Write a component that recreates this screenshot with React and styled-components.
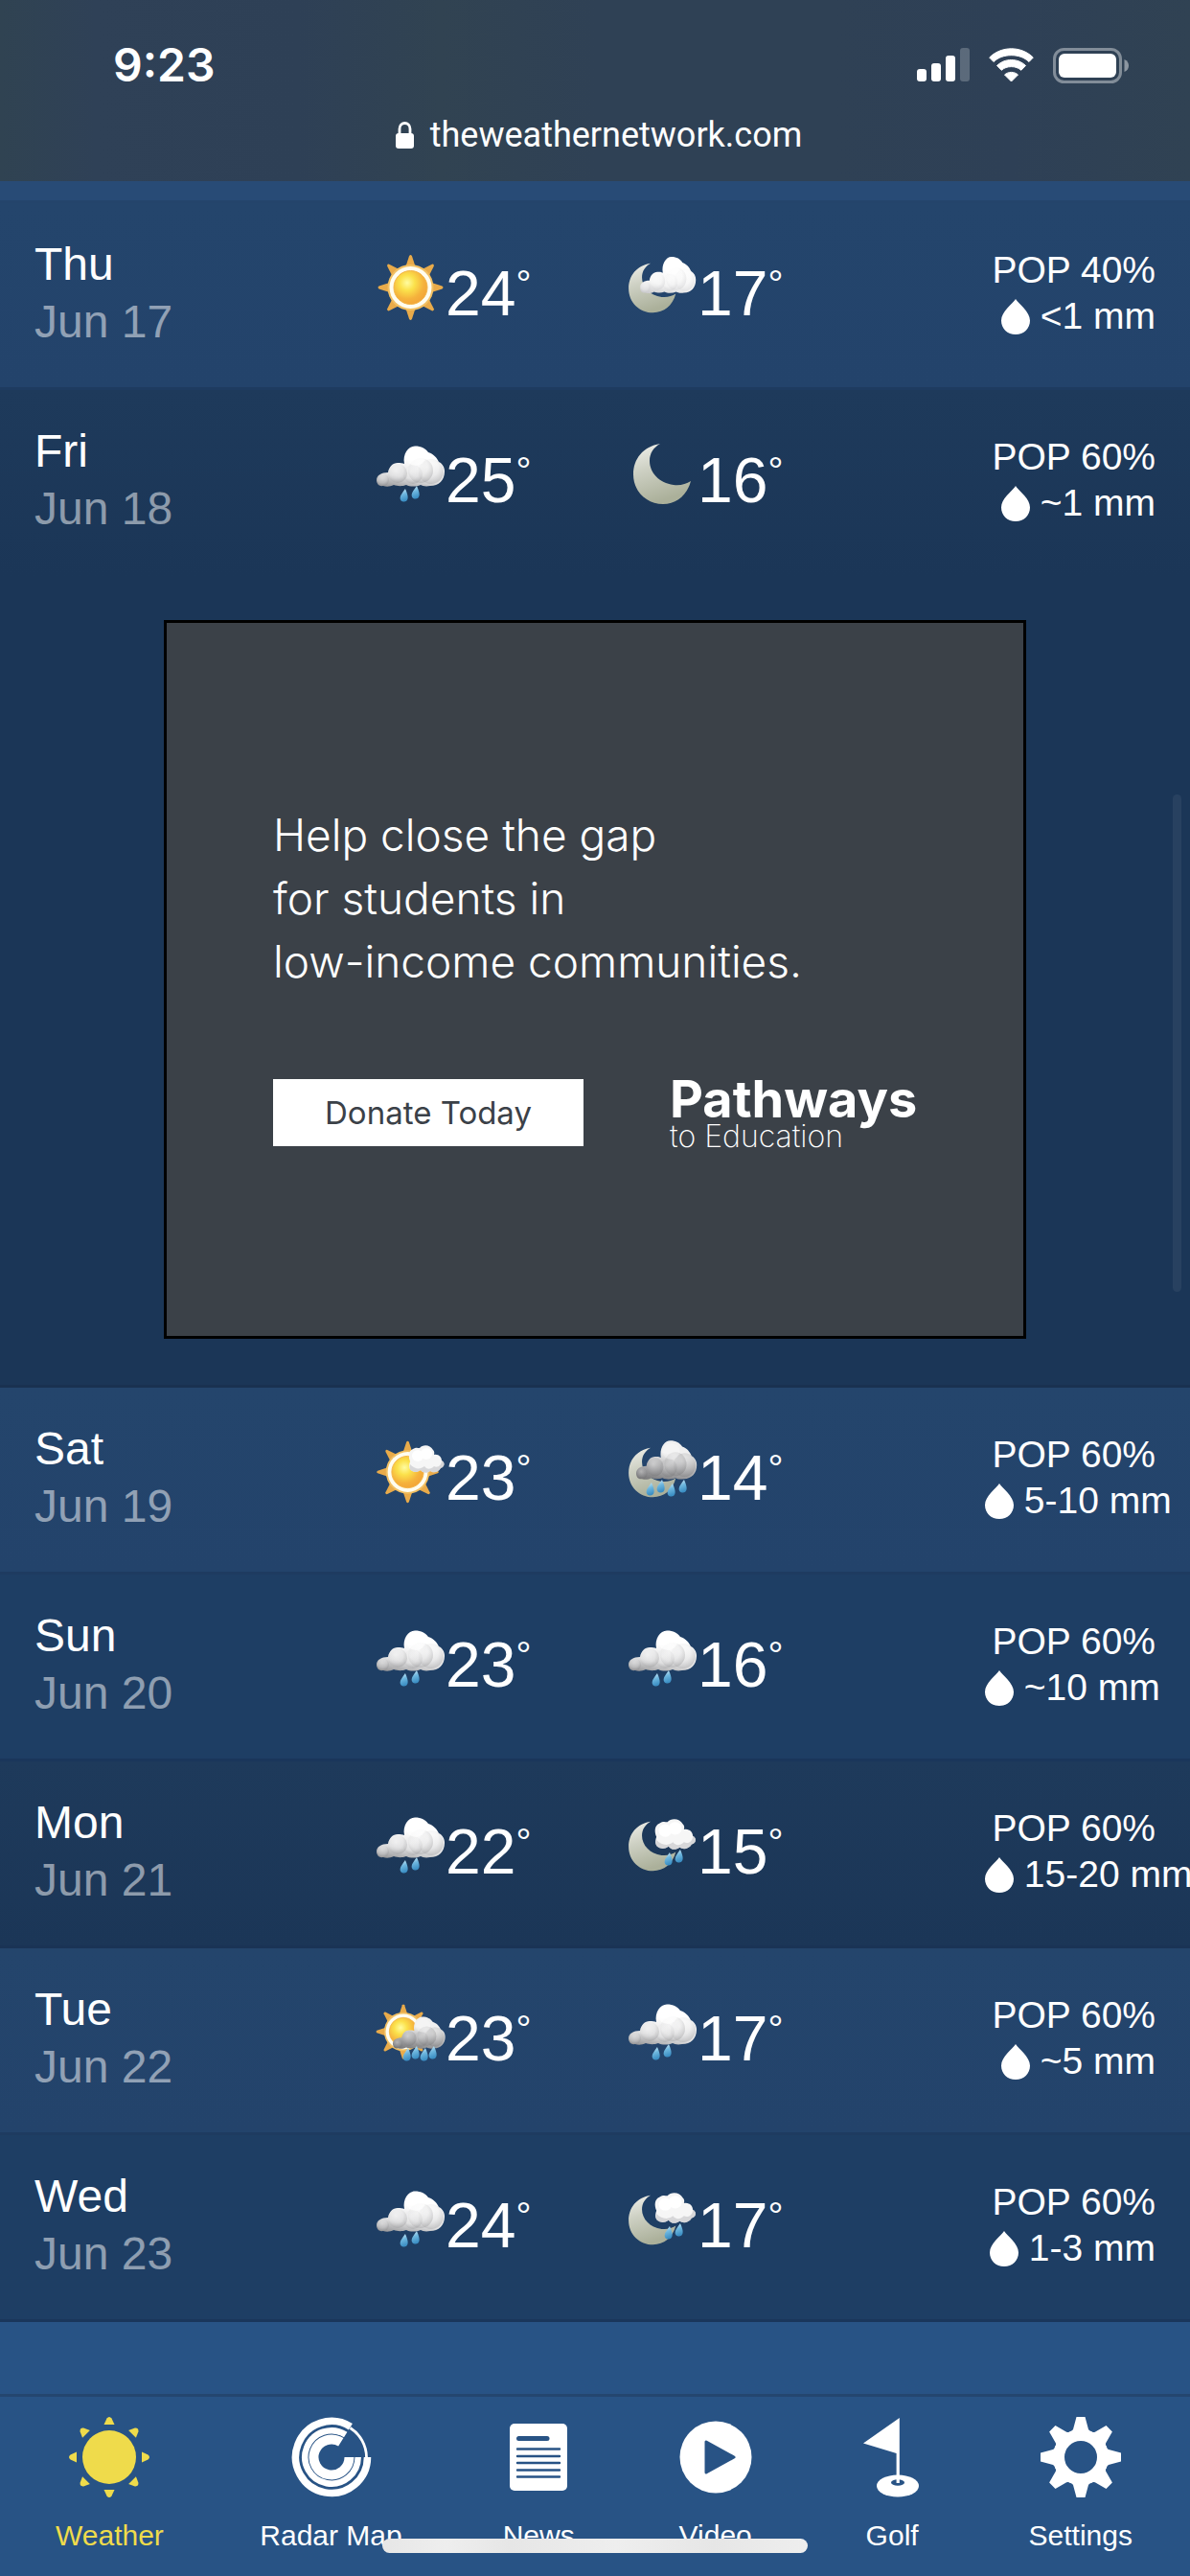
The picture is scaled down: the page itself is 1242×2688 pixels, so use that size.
import React from "react";
import styled, { createGlobalStyle } from "styled-components";

const GlobalStyle = createGlobalStyle`
  *, *::before, *::after { box-sizing: border-box; }
  html, body { margin: 0; padding: 0; }
  body {
    background: #285385;
    color: #fff;
    font-family: "Liberation Sans", Arial, sans-serif;
    overflow-x: hidden;
  }
`;

const Page = styled.div`
  position: relative;
  display: flex;
  flex-direction: column;
  min-height: 100vh;
  overflow: hidden;
  background: #285385;
`;

/* ---------- browser chrome ---------- */

const Chrome = styled.header`
  display: flex;
  flex-direction: column;
  gap: 25px;
  padding: 44px 64px 24px 118px;
  background: linear-gradient(90deg, #304352 0%, #2f4157 8%, #2e4056 25%, #314352 37%, #2f4155 50%, #2f4155 70%, #2e4056 85%, #304253 100%);
  font-family: Inter, Roboto, sans-serif;
`;

const StatusRow = styled.div`
  display: flex;
  align-items: center;
  justify-content: space-between;
  height: 48px;
`;

const Clock = styled.time`
  font-size: 48px;
  line-height: 48px;
  font-weight: 600;
`;

const StatusIcons = styled.div`
  display: flex;
  align-items: center;
  gap: 20px;
`;

const AddressRow = styled.div`
  display: flex;
  align-items: center;
  justify-content: center;
  gap: 17px;
  height: 48px;
  margin-left: -46px;
  font-family: Roboto, Inter, sans-serif;
  font-size: 36px;
  line-height: 48px;
`;

/* ---------- forecast ---------- */

const Strip = styled.div`
  height: 23px;
  background: #284b76;
  border-bottom: 3px solid #24446b;
`;

const Forecast = styled.table`
  display: block;
  width: 100%;
  border-spacing: 0;
`;

const Body = styled.tbody`
  display: block;
`;

const tones = {
  light: "linear-gradient(#24456c, #23436b)",
  mid: "#1e3e64",
  dark: "linear-gradient(#1e3a5b, #1b3657)",
};

const DayRow = styled.tr`
  display: grid;
  grid-template-columns: 357fr 263fr 372fr 178px;
  height: 195px;
  padding: 0 36px;
  overflow: hidden;
  background: ${(p) => tones[p.$tone]};
  border-bottom: ${(p) => (p.$open ? "0" : "3px solid rgba(20, 40, 75, 0.35)")};
`;

const DayCell = styled.th`
  padding: 34px 0 0;
  font-size: 48px;
  line-height: 60px;
  font-weight: 400;
  text-align: left;
`;

const DayDate = styled.div`
  color: rgba(255, 255, 255, 0.5);
`;

const TempCell = styled.td`
  display: flex;
  align-items: flex-start;
  padding: 54px 0 0;
`;

const TempValue = styled.span`
  font-size: 66px;
  line-height: 80px;
`;

const Degree = styled.span`
  font-size: 40px;
  line-height: 60px;
`;

const PopCell = styled.td`
  padding: 46px 0 0;
  font-size: 39px;
  line-height: 48px;
  text-align: right;
  white-space: nowrap;
`;

const DropIcon = styled.svg`
  width: 30px;
  height: 37px;
  vertical-align: -6px;
`;

const AdRow = styled.tr`
  display: block;
  background: #1b3657;
  border-bottom: 3px solid #193150;
`;

const AdCell = styled.td`
  display: flex;
  justify-content: center;
  padding: 45px 36px 48px;
`;

/* ---------- advertisement ---------- */

const Ad = styled.aside`
  width: 900px;
  max-width: 100%;
  height: 750px;
  padding: 188px 60px 0 111px;
  background: #3b4148;
  border: 3px solid #000;
  font-family: Inter, "Open Sans", sans-serif;
`;

const AdCopy = styled.p`
  margin: 0 0 90px;
  font-size: 46px;
  line-height: 66px;
  font-weight: 350;
`;

const AdActions = styled.div`
  display: flex;
  align-items: flex-start;
  gap: 90px;
`;

const DonateButton = styled.button`
  width: 324px;
  height: 70px;
  padding: 0;
  border: 0;
  background: #fff;
  color: #3b4148;
  font-family: inherit;
  font-size: 33px;
  font-weight: 400;
`;

const Brand = styled.div`
  white-space: nowrap;
`;

const BrandName = styled.div`
  font-size: 54px;
  line-height: 42px;
  font-weight: 700;
`;

const BrandTag = styled.div`
  font-size: 32px;
  line-height: 36px;
  font-weight: 200;
`;

/* ---------- bottom navigation ---------- */

const Nav = styled.nav`
  display: flex;
  justify-content: space-between;
  margin-top: auto;
  padding: 21px 60px 24px 58px;
  border-top: 3px solid #24466f;
  background: #285385;
`;

const NavLink = styled.a`
  display: flex;
  flex-direction: column;
  align-items: center;
  gap: 22px;
  min-width: 84px;
  color: ${(p) => (p.$active ? "#efdb4b" : "#fff")};
  font-size: 30px;
  line-height: 36px;
  text-decoration: none;
  white-space: nowrap;
`;

const NavGlyph = styled.svg`
  width: 84px;
  height: 84px;
`;

const HomeIndicator = styled.div`
  position: absolute;
  bottom: 24px;
  left: 50%;
  width: 444px;
  height: 15px;
  margin-left: -222px;
  border-radius: 8px;
  background: linear-gradient(90deg, #e6e6e6, #eee 15%, #e6e6e6 30%, #eee 55%, #e6e6e6 78%, #eee);
`;

const ScrollThumb = styled.div`
  position: absolute;
  top: 829px;
  right: 9px;
  width: 9px;
  height: 519px;
  border-radius: 5px;
  background: rgba(255, 255, 255, 0.06);
`;

const Defs = styled.svg`
  position: absolute;
  width: 0;
  height: 0;
`;

const WeatherSvg = styled.svg`
  flex: none;
  width: 72px;
  height: 72px;
  overflow: visible;
`;

/* ---------- weather drawings ---------- */

function SharedDefs() {
  return (
    <Defs aria-hidden="true">
      <defs>
        <radialGradient id="sunDisc" cx="0.4" cy="0.36" r="0.65">
          <stop offset="0" stopColor="#fffca0" />
          <stop offset="0.35" stopColor="#fbe14b" />
          <stop offset="0.75" stopColor="#f5b23c" />
          <stop offset="1" stopColor="#f3a638" />
        </radialGradient>
        <linearGradient id="moonFill" x1="0" y1="0" x2="0.3" y2="1">
          <stop offset="0" stopColor="#f1f1ec" />
          <stop offset="0.45" stopColor="#cdd0c3" />
          <stop offset="1" stopColor="#abb09a" />
        </linearGradient>
        <linearGradient id="dropFill" x1="0" y1="0" x2="0.3" y2="1">
          <stop offset="0" stopColor="#d3ecf8" />
          <stop offset="0.5" stopColor="#6db6de" />
          <stop offset="1" stopColor="#3c8fc4" />
        </linearGradient>
        {[
          ["white", "#ffffff", "#f4f4f4", "#c4c4c7"],
          ["soft", "#ffffff", "#e0e0e1", "#8c8c8e"],
          ["gray", "#f0f0f0", "#a6a6a8", "#6e6e70"],
        ].map(([name, a, b, c]) => (
          <React.Fragment key={name}>
            <linearGradient id={`cloud-${name}`} gradientUnits="userSpaceOnUse" x1="8" y1="4" x2="0" y2="47">
              <stop offset="0.2" stopColor={a} />
              <stop offset="0.65" stopColor={b} />
              <stop offset="1" stopColor={c} />
            </linearGradient>
            <radialGradient id={`puff-${name}`} cx="0.4" cy="0.36" r="0.64">
              <stop offset="0" stopColor={a} stopOpacity="0.35" />
              <stop offset="0.6" stopColor={b} stopOpacity="0.3" />
              <stop offset="1" stopColor={c} stopOpacity="0.3" />
            </radialGradient>
          </React.Fragment>
        ))}
      </defs>
    </Defs>
  );
}

const EIGHTHS = [0, 45, 90, 135, 180, 225, 270, 315];

function Sun({ x, y, scale = 1 }) {
  return (
    <g transform={`translate(${x} ${y}) scale(${scale})`}>
      {EIGHTHS.map((a) => (
        <path key={a} d="M-5 -22 L-1.4 -33 Q0 -35 1.4 -33 L5 -22 Z" fill="#e9ab4a" transform={`rotate(${a})`} />
      ))}
      <circle r="24" fill="#f2c063" />
      <circle r="22" fill="#fffdf0" />
      <circle r="17.5" fill="url(#sunDisc)" stroke="#f3b548" strokeWidth="1" />
    </g>
  );
}

function Moon({ small }) {
  return (
    <path
      d="M33 2 C15 5 5 18 5 34 C5 52 19 65 36 65 C50 65 61 56 65 41 C60 44 54 46 47 45 C32 43 22 32 22 20 C22 12 26 6 33 2 Z"
      fill="url(#moonFill)"
      transform={small ? "translate(-4 7) scale(0.82)" : undefined}
    />
  );
}

function Cloud({ tone = "soft", transform }) {
  return (
    <g transform={transform}>
      <path
        d="M7 46 C2 47 0 43 0 40 C0 35 5 32 12 32 C13 26 17 22 22 22 C25 22 27 22 29 23 C27 13 33 4.500 40 4.500 C47 4.500 51 7 54 11 C60 13 63 17 65 21 C69 23 71 27 71 31 C71 40 65 46 56 46 C51 47 48 46 46 45 C41 47 35 47 31 45 C26 47 21 46 18 45 C14 47 10 47 7 46 Z"
        fill={`url(#cloud-${tone})`}
      />
      <circle cx="7" cy="40" r="6" fill={`url(#puff-${tone})`} />
      <circle cx="38" cy="34" r="10" fill={`url(#puff-${tone})`} />
      <circle cx="22" cy="33" r="10" fill={`url(#puff-${tone})`} />
      <circle cx="57" cy="31" r="13" fill={`url(#puff-${tone})`} />
      <circle cx="46" cy="30" r="13" fill={`url(#puff-${tone})`} />
      <ellipse cx="41" cy="16" rx="10" ry="9" fill="#fff" opacity={tone === "gray" ? 0.25 : 0.6} />
    </g>
  );
}

function Puff({ x, y, height = 29 }) {
  return (
    <g transform={`translate(${x} ${y}) scale(1 ${height / 29})`}>
      <path
        d="M3 27 C-1 25 0 20 1 17 C-1 12 -1 6 4 4 C7 2 9 3 11 3 C14 -1 22 -1 25 5 C27 7 26 9 26 10 C31 9 34 13 34 16 C38 18 37 23 33 24 C30 29 25 29 22 27 C18 30 14 29 12 26 C8 29 5 28 3 27 Z"
        fill="#f6f6f6"
      />
      <path
        d="M1 20 C0 25 1 26 3 27 C5 28 8 29 12 26 C14 29 18 30 22 27 C25 29 30 29 33 24 C37 23 38 18 34 16 C34 21 30 24 26 22 C22 26 18 25 16 22 C11 26 6 25 1 20 Z"
        fill="#c6c6ca"
        opacity="0.65"
      />
      <circle cx="9" cy="11" r="6" fill="#fff" />
      <circle cx="18" cy="9" r="6" fill="#fff" />
    </g>
  );
}

function Drops({ at }) {
  return at.map(([x, y]) => (
    <path
      key={x}
      transform={`translate(${x} ${y}) rotate(8)`}
      d="M0 -7 C2.500 -3 4 0 4 2.500 C4 8 -4 8 -4 2.500 C-4 0 -2 -3 0 -7 Z"
      fill="url(#dropFill)"
    />
  ));
}

const DRAWINGS = {
  sunny: () => <Sun x={35.5} y={34} />,
  partlySunny: () => (
    <>
      <Sun x={32.5} y={34} scale={0.95} />
      <Puff x={34} y={6} />
    </>
  ),
  sunShowers: () => (
    <>
      <Sun x={28} y={33} scale={0.84} />
      <Cloud tone="gray" transform="translate(17 14) scale(0.77 0.79)" />
      <Drops at={[[32, 57], [41, 55], [50, 57], [59, 55]]} />
    </>
  ),
  rain: () => (
    <>
      <Cloud tone="soft" />
      <Drops at={[[29, 56], [41, 53]]} />
    </>
  ),
  clearNight: () => <Moon />,
  cloudyNight: () => (
    <>
      <Moon small />
      <Cloud tone="white" transform="translate(12 -2) scale(0.82 0.9)" />
    </>
  ),
  rainyNight: () => (
    <>
      <Moon small />
      <Cloud tone="gray" transform="translate(8 -3) scale(0.89 0.96)" />
      <Drops at={[[23, 52], [34, 49], [45, 53], [57, 49]]} />
    </>
  ),
  showersNight: () => (
    <>
      <Moon small />
      <g transform="translate(28 6) scale(1.15 1)">
        <Puff x={0} y={0} height={32} />
      </g>
      <Drops at={[[42, 48], [53, 45]]} />
    </>
  ),
};

function WeatherIcon({ kind, label }) {
  return (
    <WeatherSvg viewBox="0 0 72 72" role="img" aria-label={label}>
      {DRAWINGS[kind]()}
    </WeatherSvg>
  );
}

function Temperature({ kind, label, value }) {
  return (
    <TempCell>
      <WeatherIcon kind={kind} label={label} />
      <TempValue>{value}</TempValue>
      <Degree>°</Degree>
    </TempCell>
  );
}

function Day({ day, date, tone, open, high, low, pop, rain }) {
  return (
    <DayRow $tone={tone} $open={open}>
      <DayCell scope="row">
        {day}
        <DayDate>{date}</DayDate>
      </DayCell>
      <Temperature {...high} />
      <Temperature {...low} />
      <PopCell>
        <div>POP {pop}</div>
        <div>
          <DropIcon viewBox="0 0 30 37" aria-hidden="true">
            <path d="M15 0 C18 5 30 13 30 22.500 C30 31 23.500 37 15 37 C6.500 37 0 31 0 22.500 C0 13 12 5 15 0 Z" fill="#fff" />
          </DropIcon>{" "}
          {rain}
        </div>
      </PopCell>
    </DayRow>
  );
}

const t = (kind, label, value) => ({ kind, label, value });

const BEFORE_AD = [
  { day: "Thu", date: "Jun 17", tone: "light", high: t("sunny", "Sunny", 24), low: t("cloudyNight", "Cloudy periods", 17), pop: "40%", rain: "<1 mm" },
  { day: "Fri", date: "Jun 18", tone: "dark", open: true, high: t("rain", "Light rain", 25), low: t("clearNight", "Clear", 16), pop: "60%", rain: "~1 mm" },
];

const AFTER_AD = [
  { day: "Sat", date: "Jun 19", tone: "light", high: t("partlySunny", "Mainly sunny", 23), low: t("rainyNight", "Rain", 14), pop: "60%", rain: "5-10 mm" },
  { day: "Sun", date: "Jun 20", tone: "mid", high: t("rain", "Light rain", 23), low: t("rain", "Light rain", 16), pop: "60%", rain: "~10 mm" },
  { day: "Mon", date: "Jun 21", tone: "dark", high: t("rain", "Light rain", 22), low: t("showersNight", "Showers", 15), pop: "60%", rain: "15-20 mm" },
  { day: "Tue", date: "Jun 22", tone: "light", high: t("sunShowers", "Sun and showers", 23), low: t("rain", "Light rain", 17), pop: "60%", rain: "~5 mm" },
  { day: "Wed", date: "Jun 23", tone: "mid", high: t("rain", "Light rain", 24), low: t("showersNight", "Showers", 17), pop: "60%", rain: "1-3 mm" },
];

/* ---------- navigation glyphs ---------- */

const BLUE = "#285385";

const NAV = [
  {
    name: "Weather",
    active: true,
    glyph: (
      <g transform="translate(42 42)" fill="currentColor">
        <circle r="28" />
        {EIGHTHS.map((a) => (
          <path key={a} transform={`rotate(${a})`} d="M-5.500 -34 L-2.500 -40.500 Q0 -43.500 2.500 -40.500 L5.500 -34 Z" />
        ))}
      </g>
    ),
  },
  {
    name: "Radar Map",
    glyph: (
      <g fill="none" stroke="currentColor">
        <path d="M79.500 42 A37.500 37.500 0 1 1 61.900 10.200" strokeWidth="7.5" />
        <path d="M69.700 42 A27.700 27.700 0 1 1 56.700 18.500" strokeWidth="6.500" />
        <path d="M60.500 42 A18.500 18.500 0 1 1 51.800 26.300" strokeWidth="10" />
        <path d="M61.500 11.500 A36.500 36.500 0 0 1 78.500 42" strokeWidth="2.800" />
      </g>
    ),
  },
  {
    name: "News",
    glyph: (
      <>
        <rect x="12" y="7" width="60" height="70" rx="5" fill="currentColor" />
        <g stroke={BLUE} strokeLinecap="round">
          <path d="M21.500 22.500 H51" strokeWidth="5" />
          <path d="M20 33.500 H64 M20 41 H64 M20 48 H64 M20 55.500 H64 M20 62.500 H64" strokeWidth="2.400" />
        </g>
      </>
    ),
  },
  {
    name: "Video",
    glyph: (
      <>
        <circle cx="42" cy="42" r="37.500" fill="currentColor" />
        <path d="M32 26 V58 L61 42 Z" fill={BLUE} stroke={BLUE} strokeWidth="3" strokeLinejoin="round" />
      </>
    ),
  },
  {
    name: "Golf",
    glyph: (
      <>
        <ellipse cx="48" cy="72" rx="22" ry="11.500" fill="currentColor" />
        <ellipse cx="48" cy="68.500" rx="7" ry="3.300" fill={BLUE} />
        <path d="M49.800 1 L12 27.500 L46.600 38 V69 H49.800 Z" fill="currentColor" />
      </>
    ),
  },
  {
    name: "Settings",
    glyph: (
      <g transform="translate(42 42)">
        <circle r="23" fill="none" stroke="currentColor" strokeWidth="12" />
        {EIGHTHS.map((a) => (
          <path key={a} transform={`rotate(${a})`} d="M-4.500 -42 H4.500 L8 -29 Q9 -27 12 -26 L10 -22 H-10 L-12 -26 Q-9 -27 -8 -29 Z" fill="currentColor" />
        ))}
      </g>
    ),
  },
];

/* ---------- page ---------- */

export default function App() {
  return (
    <>
      <GlobalStyle />
      <SharedDefs />
      <Page>
        <Chrome>
          <StatusRow>
            <Clock>9:23</Clock>
            <StatusIcons>
              <svg width="55" height="36" viewBox="0 0 55 36" aria-label="Signal">
                <rect x="0" y="22" width="10" height="13" rx="3" fill="#fff" />
                <rect x="15" y="16" width="10" height="19" rx="3" fill="#fff" />
                <rect x="30" y="8" width="10" height="27" rx="3" fill="#fff" />
                <rect x="45" y="0" width="10" height="35" rx="3" fill="#fff" opacity="0.22" />
              </svg>
              <svg width="47" height="36" viewBox="0 0 47 36" aria-label="Wi-Fi">
                <g fill="#fff" stroke="#fff" strokeLinejoin="round">
                  <path d="M23.500 35 L16.500 28 C20.500 24.500 26.500 24.500 30.500 28 Z" strokeWidth="1" />
                  <path d="M23.500 12.500 C29.500 12.500 34.500 14.700 38.500 18.500 L33.800 23.300 C30.800 20.700 27.500 19.600 23.500 19.600 C19.500 19.600 16.200 20.700 13.200 23.300 L8.500 18.500 C12.500 14.700 17.500 12.500 23.500 12.500 Z" strokeWidth="1" />
                  <path d="M23.500 0.800 C32.500 0.800 40.500 4.300 46.300 10 L42 14.500 C37 9.800 30.800 7.700 23.500 7.700 C16.200 7.700 10 9.800 5 14.500 L0.700 10 C6.500 4.300 14.500 0.800 23.500 0.800 Z" strokeWidth="1" />
                </g>
              </svg>
              <svg width="79" height="37" viewBox="0 0 79 37" aria-label="Battery">
                <rect x="1.500" y="1.500" width="69" height="34" rx="10" fill="none" stroke="#fff" strokeWidth="3" opacity="0.4" />
                <rect x="6" y="6" width="60" height="25" rx="6" fill="#fff" />
                <path d="M74.500 12 C78 13.500 79 16 79 18.500 C79 21 78 23.500 74.500 25 Z" fill="#fff" opacity="0.45" />
              </svg>
            </StatusIcons>
          </StatusRow>
          <AddressRow>
            <svg width="19" height="28" viewBox="0 0 19 28" aria-hidden="true">
              <rect x="0" y="12" width="19" height="16" rx="3" fill="#fff" />
              <path d="M4 13 V7.500 C4 -0.500 15 -0.500 15 7.500 V13" fill="none" stroke="#fff" strokeWidth="2.800" />
            </svg>
            <span>theweathernetwork.com</span>
          </AddressRow>
        </Chrome>

        <Strip />
        <Forecast>
          <Body>
            {BEFORE_AD.map((d) => (
              <Day key={d.day} {...d} />
            ))}
            <AdRow>
              <AdCell colSpan={4}>
                <Ad aria-label="Advertisement">
                  <AdCopy>
                    Help close the gap
                    <br />
                    for students in
                    <br />
                    low-income communities.
                  </AdCopy>
                  <AdActions>
                    <DonateButton type="button">Donate Today</DonateButton>
                    <Brand>
                      <BrandName>Pathways</BrandName>
                      <BrandTag>to Education</BrandTag>
                    </Brand>
                  </AdActions>
                </Ad>
              </AdCell>
            </AdRow>
            {AFTER_AD.map((d) => (
              <Day key={d.day} {...d} />
            ))}
          </Body>
        </Forecast>

        <Nav>
          {NAV.map(({ name, active, glyph }) => (
            <NavLink key={name} href="#" $active={active}>
              <NavGlyph viewBox="0 0 84 84" aria-hidden="true">
                {glyph}
              </NavGlyph>
              {name}
            </NavLink>
          ))}
        </Nav>
        <HomeIndicator />
        <ScrollThumb />
      </Page>
    </>
  );
}
